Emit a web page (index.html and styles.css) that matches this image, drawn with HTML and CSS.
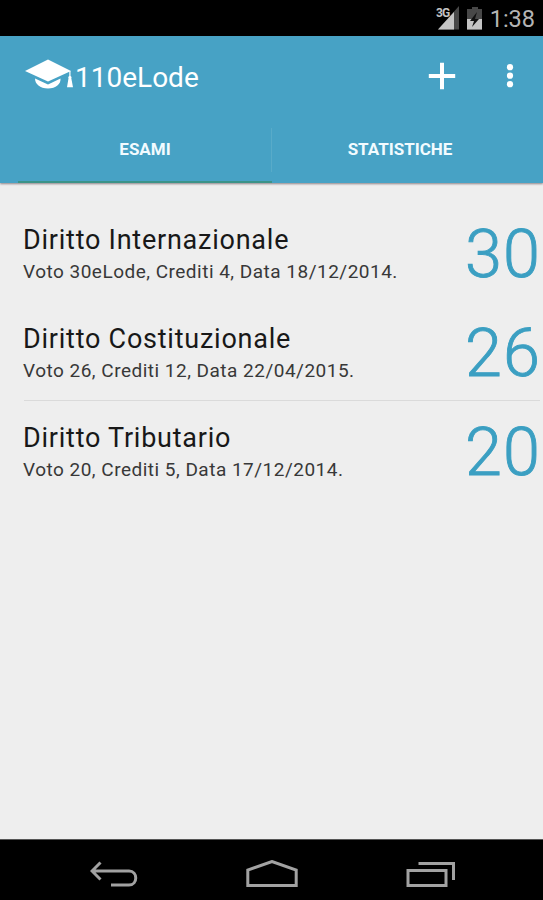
FILE: index.html
```html
<!DOCTYPE html>
<html lang="it">
<head>
<meta charset="utf-8">
<title>110eLode</title>
<link rel="stylesheet" href="styles.css">
</head>
<body>
<div class="status">
  <svg class="status-icons" width="50" height="30" viewBox="0 0 50 30">
    <path d="M25 6V29.500H4z" fill="#484848"/>
    <path d="M20 12V29.500H4z" fill="#c4c4c4"/>
    <path d="M38 7h6v2h4v20.500H33V9h5z" fill="#484848"/>
    <path d="M33 19h15v10.500H33z" fill="#c4c4c4"/>
    <path d="M43 12l-7 9h4l-2 6 7-8h-4z" fill="#111"/>
  </svg>
  <span class="network">3G</span>
  <span class="clock">1:38</span>
</div>
<header class="header">
  <div class="actionbar">
    <svg class="cap" width="50" height="32" viewBox="0 0 50 32" fill="#fff">
      <path d="M1 12L24 .5 47 12 24 22.500z"/>
      <path d="M11 19.500L24 25.500 36.500 19.500C37 25 32 29.500 24 29.500S11 25 11 19.500z"/>
      <path d="M45.300 12h1.200v5c1 .5 1.300 1.200.8 2.200l1.700 9h-6l1.500-9c-.5-1-.2-1.700.8-2.200z"/>
    </svg>
    <h1 class="brand">110eLode</h1>
    <svg class="plus" width="28" height="28" viewBox="0 0 28 28"><path d="M14 .8v26.400M.8 14h26.400" stroke="#fff" stroke-width="4"/></svg>
    <svg class="more" width="8" height="26" viewBox="0 0 8 26" fill="#fff"><circle cx="4" cy="4.200" r="3.100"/><circle cx="4" cy="12.700" r="3.100"/><circle cx="4" cy="21.200" r="3.100"/></svg>
  </div>
  <nav class="tabs">
    <div class="tab active">ESAMI</div>
    <div class="tab second">STATISTICHE</div>
  </nav>
</header>
<main class="list">
  <article class="exam">
    <div><h2 class="name">Diritto Internazionale</h2><p class="info">Voto 30eLode, Crediti 4, Data 18/12/2014.</p></div>
    <div class="grade">30</div>
  </article>
  <article class="exam">
    <div><h2 class="name">Diritto Costituzionale</h2><p class="info">Voto 26, Crediti 12, Data 22/04/2015.</p></div>
    <div class="grade">26</div>
  </article>
  <article class="exam ruled">
    <div><h2 class="name">Diritto Tributario</h2><p class="info">Voto 20, Crediti 5, Data 17/12/2014.</p></div>
    <div class="grade">20</div>
  </article>
</main>
<footer class="navbar">
  <svg width="48" height="28" viewBox="0 0 48 28"><path d="M10.500 2.500L2 11l8.500 8.500M2 11h37c9 0 9 14 0 14H21" /></svg>
  <svg width="52" height="28" viewBox="0 0 52 28"><path d="M1.800 25.500V10L26 1.500 50.200 10V25.500z"/></svg>
  <svg width="50" height="28" viewBox="0 0 50 28"><path d="M2 10.500h38V25.500H2zM12.500 3.500H47.500V20"/></svg>
</footer>
</body>
</html>
```
FILE: styles.css
```css
* { box-sizing: border-box; margin: 0; padding: 0; }
body {
  width: 543px;
  height: 900px;
  display: flex;
  flex-direction: column;
  background: #eee;
  font-family: Roboto, sans-serif;
  overflow: hidden;
}
svg { display: block; flex: none; }
.status {
  position: relative;
  height: 36px;
  background: #000;
  display: flex;
  justify-content: flex-end;
  padding-right: 8px;
}
.status-icons { margin-right: 6px; }
.network {
  position: absolute;
  left: 436px;
  top: 6px;
  font-size: 12px;
  line-height: 14px;
  font-weight: 700;
  letter-spacing: -1px;
  color: #c4c4c4;
}
.clock { font-size: 23.5px; line-height: 38px; color: #b4b4b4; }
.header {
  height: 147px;
  background: #47a2c5;
  box-shadow: 0 1px 2px #8d8388;
  flex: none;
}
.actionbar { height: 80px; display: flex; align-items: center; padding-left: 24px; color: #fff; }
.cap { margin-top: -2px; }
.brand { font-size: 28px; font-weight: 400; line-height: 34px; margin: 4px 0 0 1px; width: 353px; }
.more { margin-left: 50px; }
.tabs { height: 67px; display: flex; padding-left: 18px; }
.tab {
  width: 254px;
  border-bottom: 2px solid transparent;
  color: #f2fbff;
  text-align: center;
  font-size: 17px;
  font-weight: 700;
  line-height: 67px;
  flex: none;
}
.tab.second { padding-left: 2px; }
.tab.active {
  border-bottom-color: #3b9389;
  background: linear-gradient(#58abc9, #58abc9) right 12px / 1px 44px no-repeat;
}
.list { padding: 19px 3px 0 24px; flex: 1; }
.exam { height: 99px; display: flex; justify-content: space-between; border-top: 1px solid transparent; padding-top: 15px; }
.exam.ruled { border-color: #dadada; }
.name { font-size: 27px; font-weight: 400; line-height: 32px; margin: 6px 0 0 -1px; letter-spacing: .76px; color: #181818; white-space: nowrap; }
.info { font-size: 19px; line-height: 24px; margin: 4px 0 0 -1px; letter-spacing: .49px; color: #383838; white-space: nowrap; }
.grade { font-size: 66.5px; font-weight: 300; line-height: 73px; letter-spacing: 1.1px; margin-right: -1px; color: #3b9fc2; -webkit-text-stroke: .9px #3b9fc2; }
.navbar {
  height: 61px;
  background: #000;
  border-top: 1px solid #555;
  display: flex;
  justify-content: space-between;
  padding: 20px 87px 0 90px;
  flex: none;
}
.navbar path { fill: none; stroke: #a2a2a2; stroke-width: 3; }
```
